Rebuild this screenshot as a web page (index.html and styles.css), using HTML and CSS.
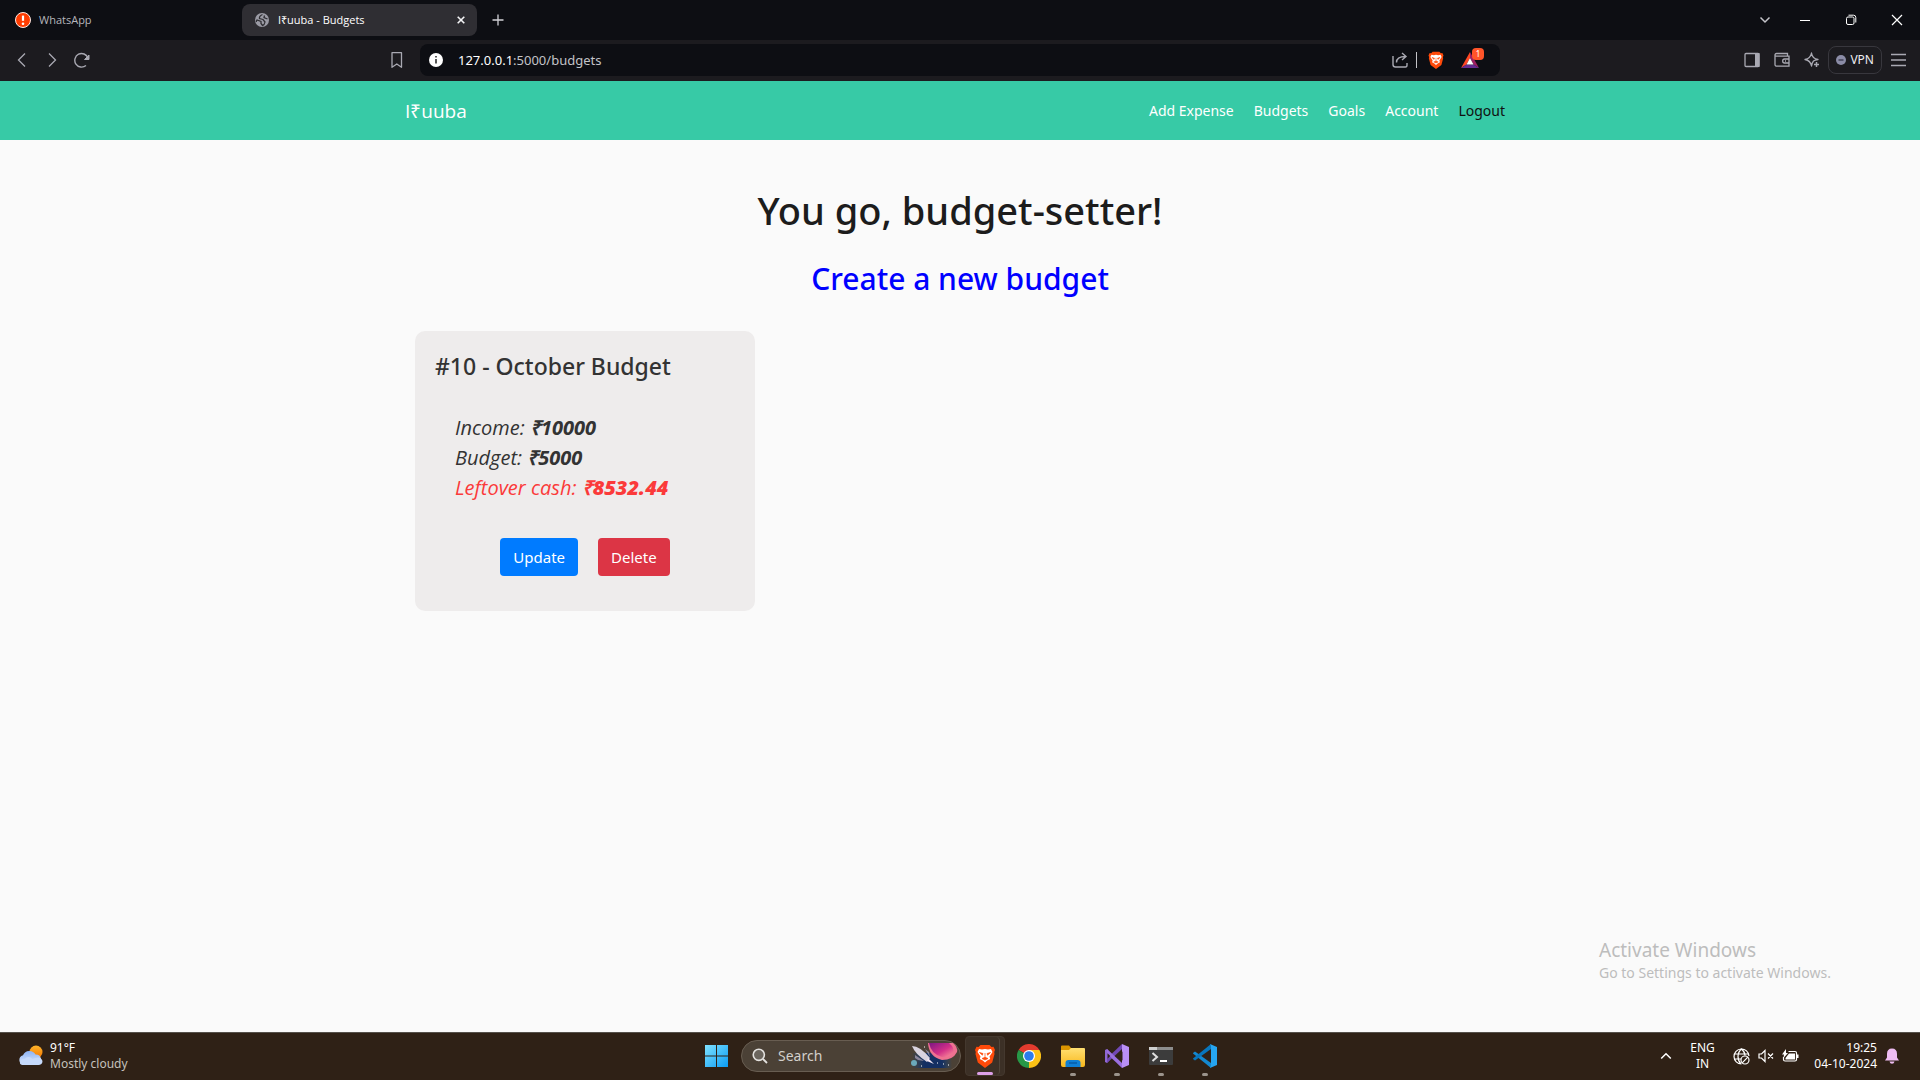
FILE: index.html
```html
<!DOCTYPE html>
<html lang="en">
<head>
<meta charset="utf-8">
<title>I₹uuba - Budgets</title>
<link rel="stylesheet" href="styles.css">
</head>
<body>
<header class="browser">
  <div class="tabstrip">
    <div class="tab">
      <svg width="16" height="16" viewBox="0 0 16 16"><circle cx="8" cy="8" r="7.5" fill="#ff3c00" stroke="#ffe9e2"/><path d="M8 3.600v5.200" stroke="#fff" stroke-width="2.200"/><circle cx="8" cy="11.700" r="1.300" fill="#fff"/></svg>
      <span class="tab-title">WhatsApp</span>
    </div>
    <div class="tab tab-active">
      <svg width="14" height="14" viewBox="0 0 14 14"><circle cx="7" cy="7" r="7" fill="#9b9ba5"/><path d="M7.500 1.500Q4 3 4.500 5.500L8 6.500 10 9Q9.500 12 7.500 12.500L6 10.500V8.500L2 7Q1 8 1.500 9M9.500 2.500 9 4.500l3.500 1.500" fill="none" stroke="#2f2e33" stroke-width="1.300"/></svg>
      <span class="tab-title">I₹uuba - Budgets</span>
      <button class="icon-button" aria-label="Close tab"><svg width="8" height="8" viewBox="0 0 8 8"><path d="M.7.7l6.600 6.600M7.300.7.7 7.300" stroke="#f4f4f6" stroke-width="1.600"/></svg></button>
    </div>
    <button class="icon-button new-tab" aria-label="New tab"><svg width="12" height="12" viewBox="0 0 12 12"><path d="M6 .5v11M.5 6h11" stroke="#d2d2d8" stroke-width="1.300"/></svg></button>
    <button class="icon-button tab-search" aria-label="Search tabs"><svg width="12" height="12" viewBox="0 0 12 12"><path d="M1.500 3.500 6 8l4.500-4.500" fill="none" stroke="#c4c4ca" stroke-width="1.500"/></svg></button>
    <div class="window-controls">
      <button class="icon-button" aria-label="Minimize"><svg width="12" height="12" viewBox="0 0 12 12"><path d="M1 6.500h10" stroke="#fff"/></svg></button>
      <button class="icon-button" aria-label="Restore"><svg width="12" height="12" viewBox="0 0 12 12"><rect x="1.500" y="3" width="7.500" height="7.500" rx="1.500" fill="none" stroke="#fff"/><path d="M3.500 1.200H8.500Q10.800 1.200 10.800 3.500V8.500" fill="none" stroke="#fff"/></svg></button>
      <button class="icon-button" aria-label="Close"><svg width="12" height="12" viewBox="0 0 12 12"><path d="M1 1l10 10M11 1 1 11" stroke="#fff" stroke-width="1.200"/></svg></button>
    </div>
  </div>
  <div class="toolbar">
    <div class="toolbar-nav">
      <button class="icon-button" aria-label="Back"><svg width="16" height="16" viewBox="0 0 16 16"><path d="M11 1.500 4.500 8l6.500 6.500" fill="none" stroke="#a9a9b2" stroke-width="1.300"/></svg></button>
      <button class="icon-button" aria-label="Forward"><svg width="16" height="16" viewBox="0 0 16 16"><path d="M5 1.500 11.500 8 5 14.500" fill="none" stroke="#a9a9b2" stroke-width="1.300"/></svg></button>
      <button class="icon-button" aria-label="Reload"><svg width="16" height="16" viewBox="0 0 16 16"><path d="M12 13.500A6.800 6.800 0 1 1 14 6" fill="none" stroke="#a9a9b2" stroke-width="1.400"/><path d="M15 3v4.500h-4.500z" fill="#a9a9b2" stroke="#a9a9b2" stroke-linejoin="round"/></svg></button>
    </div>
    <button class="icon-button bookmark" aria-label="Bookmark"><svg width="14" height="18" viewBox="0 0 14 18"><path d="M2 1.700h9.500V16.300L6.800 13 2 16.300z" fill="none" stroke="#a9a9b2" stroke-width="1.300" stroke-linejoin="round"/></svg></button>
    <div class="address">
      <svg width="14" height="14" viewBox="0 0 14 14"><circle cx="7" cy="7" r="7" fill="#fff"/><path d="M7 6v4.500M7 3v1.600" stroke="#222" stroke-width="1.500"/></svg>
      <span class="url"><b>127.0.0.1</b>:5000/budgets</span>
      <button class="icon-button" aria-label="Share"><svg width="16" height="16" viewBox="0 0 16 16"><path d="M1 4v8.500Q1 15 3.500 15h10Q15 15 15 13v-2M4.500 10.500Q4.500 4.500 13.500 4.500M10 1l4 3.500-4 3.500" fill="none" stroke="#a9a9b2" stroke-width="1.400"/></svg></button>
      <span class="divider"></span>
      <button class="icon-button" aria-label="Brave Shields"><svg width="16" height="18" viewBox="0 0 20 24"><use href="#brave"/></svg></button>
      <button class="icon-button rewards" aria-label="Brave Rewards"><svg width="18" height="16" viewBox="0 0 18 16"><path d="M9 0 0 16 5.500 12.500 9 6z" fill="#ff4724"/><path d="M9 0 18 16 12.500 12.500 9 6z" fill="#9e1f63"/><path d="M0 16h18l-5.500-3.500h-7z" fill="#662d91"/><path d="M9 6l3.500 6.500h-7z" fill="#fff"/></svg><span class="badge">1</span></button>
    </div>
    <div class="toolbar-actions">
      <button class="icon-button" aria-label="Sidebar"><svg width="16" height="16" viewBox="0 0 16 16"><rect x="1" y="1.500" width="14" height="13" rx="1" fill="none" stroke="#a9a9b2" stroke-width="1.300"/><path d="M11 1h4.500v14H11z" fill="#a9a9b2"/></svg></button>
      <button class="icon-button" aria-label="Wallet"><svg width="16" height="16" viewBox="0 0 16 16"><path d="M1 3Q1 1.500 2.500 1.500h11v2.700M1 3Q1 4.200 2.500 4.200H15v10H3Q1 14.200 1 12.500zM15 7H10.500Q8.700 7 8.700 9t1.800 2H15M11 9h1" fill="none" stroke="#a9a9b2" stroke-width="1.300"/></svg></button>
      <button class="icon-button" aria-label="Leo AI"><svg width="16" height="16" viewBox="0 0 16 16"><path d="M7.500 1Q8.200 6.700 14 7.500 11 8 9.500 9 8.200 10.500 7.500 14 6.500 8.500 1 7.500 6.500 6.500 7.500 1z" fill="none" stroke="#a9a9b2" stroke-width="1.300" stroke-linejoin="round"/><path d="M12.500 10v5M10 12.500h5" stroke="#a9a9b2" stroke-width="1.500"/></svg></button>
      <button class="vpn"><svg width="10" height="10" viewBox="0 0 10 10"><circle cx="5" cy="5" r="5" fill="#8b8ca6"/><path d="M2.500 5h5" stroke="#35354a" stroke-width="1.300"/></svg>VPN</button>
      <button class="icon-button" aria-label="Menu"><svg width="16" height="16" viewBox="0 0 16 16"><path d="M0 2.500h15M0 8h15M0 13.500h15" stroke="#a9a9b2" stroke-width="1.300"/></svg></button>
    </div>
  </div>
</header>

<nav class="navbar">
  <div class="container navbar-inner">
    <a class="brand" href="#">I₹uuba</a>
    <div class="links">
      <a href="#">Add Expense</a>
      <a href="#">Budgets</a>
      <a href="#">Goals</a>
      <a href="#">Account</a>
      <a class="logout" href="#">Logout</a>
    </div>
  </div>
</nav>

<main class="container page">
  <h1>You go, budget-setter!</h1>
  <h2><a href="#">Create a new budget</a></h2>
  <div class="cards">
    <article class="card">
      <h3>#10 - October Budget</h3>
      <ul class="figures">
        <li>Income: <strong>₹10000</strong></li>
        <li>Budget: <strong>₹5000</strong></li>
        <li class="leftover">Leftover cash: <strong>₹8532.44</strong></li>
      </ul>
      <div class="card-actions">
        <button class="btn btn-primary">Update</button>
        <button class="btn btn-danger">Delete</button>
      </div>
    </article>
  </div>
</main>

<aside class="activation">
  <p class="activation-title">Activate Windows</p>
  <p>Go to Settings to activate Windows.</p>
</aside>

<footer class="taskbar">
  <div class="weather">
    <svg width="26" height="24" viewBox="0 0 26 24"><defs><linearGradient id="sun" x2="0" y2="1"><stop stop-color="#ffb52b"/><stop offset="1" stop-color="#f27500"/></linearGradient><linearGradient id="cloud" x2="0" y2="1"><stop stop-color="#8db4f6"/><stop offset="1" stop-color="#dce9fc"/></linearGradient></defs><circle cx="18" cy="8" r="6.500" fill="url(#sun)"/><path d="M6 21a5 5 0 0 1-1-9.800A7 7 0 0 1 17.500 10.500 5.500 5.500 0 0 1 20 21z" fill="url(#cloud)"/><path d="M2 19q0-4 4.500-4 4-4 8 0 8-4 10 2 0 4-4.500 4H6q-4 0-4-2z" fill="#c6dafb"/></svg>
    <div class="weather-text"><span class="temperature">91°F</span><span>Mostly cloudy</span></div>
  </div>

  <div class="apps">
    <button class="app" aria-label="Start"><svg width="24" height="24" viewBox="0 0 24 24"><defs><linearGradient id="win" x2="1" y2="1"><stop stop-color="#7fe1ff"/><stop offset="1" stop-color="#0a9cf5"/></linearGradient></defs><path d="M0 1h11v10.500H0zM12 1H23v10.500H12zM0 12.500h11V23H0zM12 12.500H23V23H12z" fill="url(#win)"/></svg></button>
    <label class="search">
      <svg width="16" height="16" viewBox="0 0 16 16"><circle cx="6.800" cy="6.800" r="5.600" fill="#6b655d" stroke="#e4e2df" stroke-width="1.600"/><path d="M11 11l4 4" stroke="#e4e2df" stroke-width="1.800"/></svg>
      <input type="text" placeholder="Search" aria-label="Search">
      <svg width="50" height="30" viewBox="0 0 50 30"><defs><linearGradient id="space" x2="1"><stop stop-color="#17457a" stop-opacity="0"/><stop offset=".3" stop-color="#142f62"/><stop offset=".75" stop-color="#142f62"/><stop offset="1" stop-color="#17457a" stop-opacity="0"/></linearGradient><linearGradient id="planet" x2="1" y2="1"><stop stop-color="#7d1682"/><stop offset=".55" stop-color="#d22f88"/><stop offset="1" stop-color="#ff9a9a"/></linearGradient></defs><path d="M2 12h40v15H2z" fill="url(#space)"/><path d="M18 2h25q5 4 4 9-4 8-15 8-13-3-14-17z" fill="#ee7191"/><path d="M19 2h20q6 5 4 10-5 5-11 4-11-3-13-14z" fill="url(#planet)"/><circle cx="4" cy="22" r="3" fill="#6ba9bb"/><path d="M2 5q8 0 18 12l-3 4Q5 13 2 5z" fill="#d9d3df"/><path d="M5 14l9 6-6-1-3-2zM15 8l4 3 1 5z" fill="#8c879d"/><path d="M18 17l6 6-7-3z" fill="#f6e8f5"/><path d="M11 25h1M33 23h1M38 24h1M14 6h1M27 22h1" stroke="#fff"/></svg>
    </label>
    <button class="app app-active" aria-label="Brave"><svg width="20" height="24" viewBox="0 0 20 24"><g id="brave"><path d="M5.500 1h9L16.500 3l2-.2L20 6l-.8 2 .3 2-2.300 8.500L10 24l-7.200-5.500L.5 10l.3-2L0 6l1.500-3.200 2 .2z" fill="#ff4a0a"/><path d="M4 5l3 .6L10 5l3 .6 3-.6 1.500 3-3 4.500.7 2.500-3 1.500-2.200 2-2.200-2-3-1.500.7-2.500-3-4.500z" fill="#fff"/><path d="M4.500 8.500 8 9.500l-.6 1.700zM15.500 8.500 12 9.500l.6 1.700zM10 9v4.500M7 14.500l3-1.200 3 1.200-3 1.500z" fill="#ff4a0a" stroke="#ff4a0a" stroke-width=".7"/></g></svg></button>
    <button class="app" aria-label="Chrome"><svg width="24" height="24" viewBox="0 0 24 24"><path d="M12 12 1.600 6A12 12 0 0 1 22.400 6z" fill="#e33b2e"/><path d="M12 12 22.400 6A12 12 0 0 1 12 24z" fill="#fbc116"/><path d="M12 12v12A12 12 0 0 1 1.600 6z" fill="#279847"/><path d="M12 6h10.400L17.200 15 12 24 17 14z" fill="#fbc116"/><path d="M1.600 6 7 15l5 3-3 5.600z" fill="#279847"/><circle cx="12" cy="12" r="6" fill="#fff"/><circle cx="12" cy="12" r="4.800" fill="#2b7cec"/></svg></button>
    <button class="app app-open" aria-label="File Explorer"><svg width="24" height="24" viewBox="0 0 24 24"><defs><linearGradient id="folder" x2="0" y2="1"><stop stop-color="#ffdf72"/><stop offset="1" stop-color="#f9b81c"/></linearGradient></defs><path d="M0 2.500Q0 1.500 1 1.500h7L10 4h13v8H0z" fill="#dc9600"/><path d="M0 6h8l2-2h13Q24 4 24 5v16q0 2-2 2H2q-2 0-2-2z" fill="url(#folder)"/><path d="M4.500 23v-4q0-3 3-3h9q3 0 3 3v4z" fill="#0f7fd4"/><path d="M8 19h8" stroke="#075da9" stroke-width="1.500"/></svg></button>
    <button class="app app-open" aria-label="Visual Studio"><svg width="24" height="24" viewBox="0 0 24 24"><path d="M0 6 2 5l4 4.500v5L2 19l-2-1z" fill="#8f68d4"/><path d="M2 19 17 5V0L7.500 9 2 14.500z" fill="#7148b5"/><path d="M2 5 17 19v5L7.500 15 2 9.500z" fill="#9a6fe0"/><path d="M2.500 9.200 5.300 12l-2.800 2.800z" fill="#2f2116"/><path d="M17 0l7 3v18l-7 3z" fill="#b98ff5"/><path d="M17.500 7.500v9L12 12z" fill="#2f2116"/></svg></button>
    <button class="app app-open" aria-label="Terminal"><svg width="24" height="20" viewBox="0 0 24 20"><rect y="1" width="24" height="18" rx="1" fill="#3c3c3c"/><path d="M0 1h24v3H0z" fill="#8d8d8d"/><path d="M0 1h8v3H0z" fill="#cfcfcf"/><path d="M3.500 7 8 11l-4.500 4" fill="none" stroke="#e0e0e0" stroke-width="2"/><path d="M11 15h7" stroke="#fff" stroke-width="2"/></svg></button>
    <button class="app app-open" aria-label="Visual Studio Code"><svg width="24" height="24" viewBox="0 0 24 24"><path d="M0 9l2-1.500L18 19v5L0 9.500z" fill="#1388d0"/><path d="M0 15l2 1.500L18 5V0L0 14.500z" fill="#0876bd"/><path d="M17 0l7 3v18l-7 3q1-1 1-3V3q0-2-1-3z" fill="#26a5f0"/></svg></button>
  </div>

  <div class="tray">
    <button class="icon-button" aria-label="Show hidden icons"><svg width="12" height="12" viewBox="0 0 12 12"><path d="M1.200 8.500 6 3.700l4.800 4.800" fill="none" stroke="#fff" stroke-width="1.500"/></svg></button>
    <div class="language"><span>ENG</span><span>IN</span></div>
    <div class="status">
      <svg width="17" height="17" viewBox="0 0 17 17"><g fill="none" stroke="#fff" stroke-width="1.200"><path d="M8.500 16A7.500 7.500 0 1 1 16 8M1 6h14.500M1 11h7M8.500 1Q5 4 5 8.500T8 16M8.500 1Q12 4 12 7.500"/><circle cx="12" cy="12" r="4"/><path d="M9.200 14.800l5.600-5.600"/></g></svg>
      <svg width="16" height="14" viewBox="0 0 16 14"><path d="M1 5v4h2.500L7 12.500v-11L3.500 5zM10 4.500l5 5M15 4.500l-5 5" fill="none" stroke="#fff" stroke-width="1.200"/></svg>
      <svg width="17" height="14" viewBox="0 0 17 14"><path d="M6.500 2.500H13q1.500 0 1.500 1.500v6.500Q14.500 12 13 12H3q-1.500 0-1.500-1.500V8" fill="none" stroke="#fff" stroke-width="1.200"/><path d="M7 4.500h6v6H3.500V9zM15 5.500h1.500v3.500H15zM4 0 0 5.500h2L1.500 9 6 4H4z" fill="#fff"/></svg>
    </div>
    <div class="clock"><time>19:25</time><time>04-10-2024</time></div>
    <svg width="14" height="16" viewBox="0 0 14 16"><path d="M7 .5Q12 .5 12 6v3.500l2 3H0l2-3V6Q2 .5 7 .5zM4.500 13.500h5Q9 15.700 7 15.700t-2.500-2.200z" fill="#eebcf2"/></svg>
  </div>
</footer>
</body>
</html>
```
FILE: styles.css
```css
*, *::before, *::after { box-sizing: border-box; }

body {
  margin: 0;
  min-height: 100vh;
  display: flex;
  flex-direction: column;
  background: #fafafa;
  color: #1c1c1c;
  font: 15px/24px "Noto Sans", "Open Sans", sans-serif;
}

h1, h2, h3, p, ul { margin: 0; padding: 0; font-weight: 500; }
a { color: inherit; text-decoration: none; }
svg { display: block; flex: none; }
button, input { font: inherit; color: inherit; }

.icon-button {
  display: flex;
  padding: 0;
  border: 0;
  background: none;
}

/* Browser chrome */
.browser {
  background: #1c1b1f;
  color: #ededf0;
  font-size: 12px;
  line-height: 16px;
}

.tabstrip {
  display: flex;
  align-items: center;
  height: 40px;
  padding: 0 17px 0 3px;
  background: #0d0e13;
}

.tab {
  display: flex;
  align-items: center;
  gap: 8px;
  width: 239px;
  height: 32px;
  padding: 0 12px;
  color: #b6b6bc;
  font-family: "Open Sans", sans-serif;
  font-size: 11px;
}

.tab-active {
  gap: 9px;
  width: 235px;
  padding-left: 13px;
  border-radius: 8px;
  background: #2f2e33;
  color: #fff;
}

.tab-title { flex: 1; }
.new-tab { margin-left: 15px; }
.tab-search { margin-left: auto; }

.window-controls {
  display: flex;
  gap: 34px;
  margin-left: 28px;
}

.toolbar {
  display: flex;
  align-items: center;
  height: 41px;
  padding: 0 13px 1px 14px;
}

.toolbar-nav {
  display: flex;
  gap: 14px;
  width: 376px;
}

.address {
  display: flex;
  align-items: center;
  flex: 1;
  max-width: 1080px;
  height: 32px;
  margin-left: 16px;
  padding: 0 21px 0 9px;
  border-radius: 8px;
  background: #0d0e13;
}

.url {
  flex: 1;
  padding-left: 15px;
  color: #c3c3c8;
  font-size: 13px;
}

.url b { color: #fff; font-weight: 400; }

.divider {
  width: 1px;
  height: 16px;
  margin: 0 11px 0 8px;
  background: #c3c3c8;
}

.rewards {
  position: relative;
  margin-left: 17px;
}

.badge {
  position: absolute;
  top: -4px;
  left: 11px;
  width: 12px;
  height: 12px;
  border-radius: 4px;
  background: #ff5429;
  color: #fff;
  font-size: 8px;
  line-height: 12px;
}

.toolbar-actions {
  display: flex;
  align-items: center;
  gap: 14px;
  margin-left: auto;
}

.vpn {
  display: flex;
  align-items: center;
  gap: 4px;
  height: 28px;
  margin: 0 -5px 0 -6px;
  padding: 0 7px;
  border: 1px solid #38373d;
  border-radius: 8px;
  background: none;
}

/* Site */
.container {
  width: 100%;
  max-width: 1140px;
  margin: 0 auto;
  padding: 0 15px;
}

.navbar { background: #37caa6; }

.navbar-inner {
  display: flex;
  align-items: center;
  justify-content: space-between;
  height: 59px;
}

.brand {
  color: #fff;
  font-family: "Open Sans", sans-serif;
  font-size: 19px;
}

.links { display: flex; color: #fff; font-size: 14px; }
.links a { padding: 8px 10px; }
.links .logout { color: #111; }

.page {
  flex: 1;
  padding-top: 46px;
}

h1 {
  font-size: 38px;
  line-height: 48px;
  text-align: center;
}

h2 {
  margin-top: 25px;
  color: #00f;
  font-size: 30px;
  line-height: 40px;
  text-align: center;
}

.cards {
  display: grid;
  grid-template-columns: repeat(3, 1fr);
  gap: 35px;
  margin-top: 32px;
  padding: 0 10px;
}

.card {
  padding: 19px 20px 35px;
  border-radius: 10px;
  background: #eeecec;
  color: #333;
}

h3 {
  font-size: 23px;
  line-height: 32px;
}

.figures {
  margin-top: 31px;
  padding-left: 20px;
  list-style: none;
  font-family: "Open Sans", sans-serif;
  font-size: 20px;
  font-style: italic;
  font-weight: 400;
  line-height: 30px;
}

.leftover { color: #fb3a3a; font-weight: 500; }
.leftover strong { font-weight: 800; }

.card-actions {
  display: flex;
  justify-content: center;
  gap: 20px;
  margin-top: 35px;
}

.btn {
  height: 38px;
  padding: 0 13px;
  border: 0;
  border-radius: 4px;
  color: #fff;
  font-size: 15px;
}

.btn-primary { background: #007bff; }
.btn-danger { background: #dc3545; }

/* Desktop */
.activation {
  align-self: flex-end;
  width: 321px;
  padding-bottom: 49px;
  color: #bdbdbd;
  font-size: 14px;
  line-height: 20px;
}

.activation p { font-weight: 400; }
.activation .activation-title { font-size: 19px; line-height: 25px; }

.taskbar {
  display: grid;
  grid-template-columns: 1fr auto 1fr;
  align-items: center;
  height: 48px;
  padding-bottom: 1px;
  border-top: 1px solid #55504a;
  background: #2f2116;
  color: #fff;
  font-size: 12px;
  line-height: 16px;
}

.weather {
  display: flex;
  align-items: center;
  gap: 6px;
  padding-left: 18px;
}

.weather-text { display: flex; flex-direction: column; color: #c5c1bc; }
.temperature { color: #fff; }

.apps { display: flex; align-items: center; padding-left: 2px; }

.app {
  position: relative;
  display: flex;
  align-items: center;
  justify-content: center;
  width: 40px;
  height: 40px;
  margin: 0 2px;
  padding: 0;
  border: 0;
  border-radius: 4px;
  background: none;
}

.app-active {
  border: 1px solid #44382e;
  background: #3c3026;
}

/* Edge of the second stacked window */
.app-active::before {
  content: "";
  position: absolute;
  inset: 0 4px 0 0;
  border-right: 1px solid #51463b;
  border-radius: 4px;
}

.app-open::after, .app-active::after {
  content: "";
  position: absolute;
  bottom: 0;
  width: 6px;
  height: 3px;
  border-radius: 2px;
  background: #9c948c;
}

.app-active::after { width: 16px; background: #dda0e8; }

.search {
  display: flex;
  align-items: center;
  width: 220px;
  height: 32px;
  margin: 0 2px;
  padding: 0 0 0 10px;
  border: 1px solid #685d51;
  border-radius: 16px;
  background: #4b4136;
}

.search input {
  flex: 1;
  min-width: 0;
  padding: 0 0 0 10px;
  border: 0;
  background: none;
  font-size: 14px;
}

.search input::placeholder { color: #d2cfcb; opacity: 1; }

.tray {
  display: flex;
  align-items: center;
  justify-content: flex-end;
  padding-right: 21px;
}

.language {
  display: flex;
  flex-direction: column;
  align-items: center;
  width: 61px;
}

.status { display: flex; align-items: center; gap: 8px; }

.clock {
  display: flex;
  flex-direction: column;
  align-items: flex-end;
  width: 78px;
  margin-right: 8px;
}
```
